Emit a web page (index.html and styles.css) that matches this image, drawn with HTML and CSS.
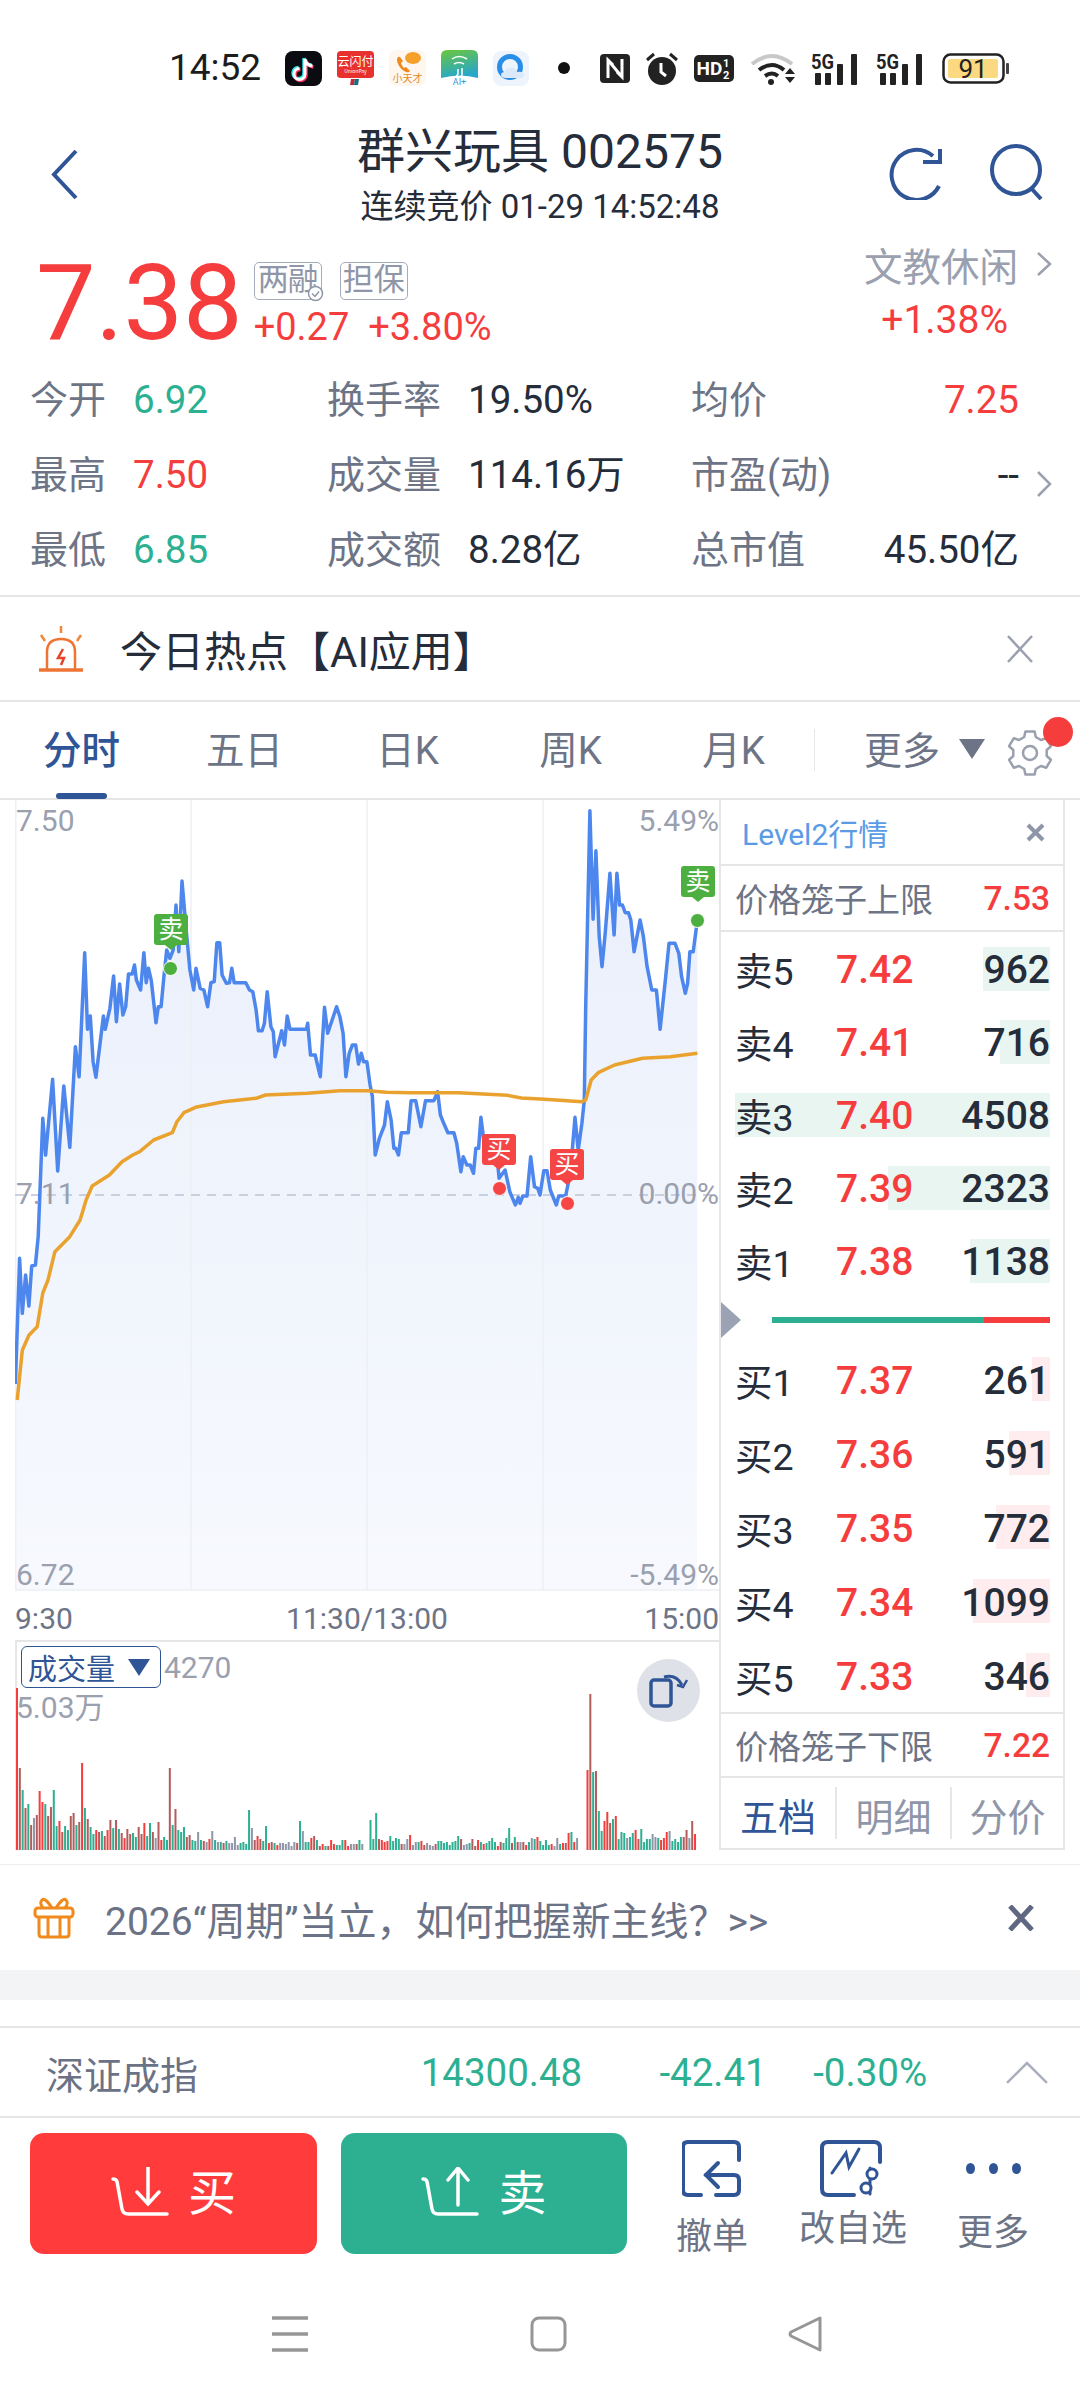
FILE: index.html
```html
<!DOCTYPE html>
<html lang="zh-CN">
<head>
  <meta charset="UTF-8" />
  <title>群兴玩具 002575</title>
  <link rel="stylesheet" href="styles.css">
</head>
<body>

  <!-- status bar -->
  <div class="status">
    <span class="clock">14:52</span>
    <div class="app-icons">
      <svg width="37" height="35" viewBox="0 0 37 35"><rect width="37" height="35" rx="8" fill="#0b0b12"/><path class="tt tt-c" d="M19 7v15a5.5 5.5 0 1 1-5.5-5.5M19 7c.6 4 3.6 6.5 7.5 7"/><path class="tt tt-r" d="M21 9v15a5.5 5.5 0 1 1-5.5-5.5M21 9c.6 4 3.6 6.5 7.5 7"/><path class="tt tt-w" d="M20 8v15a5.5 5.5 0 1 1-5.5-5.5M20 8c.6 4 3.6 6.5 7.5 7"/></svg>
      <svg width="37" height="35" viewBox="0 0 37 35"><path d="M4 0h29q4 0 4 4v20q0 3-4 3H4q-4 0-4-3V4q0-4 4-4z" fill="#e8302c"/><text class="tiny-white" x="18.5" y="15" font-size="12" text-anchor="middle">云闪付</text><text class="tiny-white" x="18.5" y="22" font-size="5" text-anchor="middle">UnionPay</text><path d="M14 28h4l-1 6h-4z" fill="#c22a36"/><path d="M18 28h4l-1 6h-4z" fill="#136f86"/></svg>
      <svg width="37" height="36" viewBox="0 0 37 36"><rect width="37" height="36" rx="8" fill="#fdf7f0"/><path d="M9 7q-2 2 0 7 3 6 8 8 3 1 4-1l-4-4-2 1q-2-2-3-5l2-2-3-4z" fill="#f08a1c"/><ellipse cx="24" cy="8" rx="8" ry="6" fill="#f5a02a"/><text class="tiny-orange" x="18.5" y="32" font-size="10" text-anchor="middle">小天才</text></svg>
      <svg width="37" height="44" viewBox="0 -4 37 44"><defs><linearGradient id="aiGrad" x1="0" y1="0" x2="0.3" y2="1"><stop offset="0" stop-color="#6cc63c"/><stop offset="1" stop-color="#27a7c8"/></linearGradient></defs><path d="M6 0h25q6 0 6 6v22q-18-5-37 0V6q0-6 6-6z" fill="url(#aiGrad)"/><path class="ai-line" d="M11 9q7-5 15 0M13 14q5-3 10 0M17 19v5l-3 4M21 18v10"/><text class="tiny-blue" x="18.5" y="35" font-size="9" text-anchor="middle">AI+</text></svg>
      <svg width="36" height="35" viewBox="0 0 36 35"><rect width="36" height="35" rx="8" fill="#eef4fc"/><circle cx="17" cy="16" r="10.5" fill="none" stroke="#2a8ee8" stroke-width="5"/><path d="M13 27q-5 0-5-3t4-3q1-5 7-4 5 0 5 4 7-1 7 3t-5 3z" fill="#dbe9f8"/></svg>
    </div>
    <span class="status-dot"></span>
    <div class="sys-icons">
      <svg width="30" height="29" viewBox="0 0 30 29"><rect width="30" height="29" rx="4" fill="#222"/><path d="M8 24V6l5 5M22 5v18l-5-5M8 6l14 17" fill="none" stroke="#fff" stroke-width="3"/></svg>
      <svg width="32" height="34" viewBox="0 0 32 34"><circle cx="16" cy="20" r="14" fill="#222"/><path d="M15 12v9l5 4" fill="none" stroke="#fff" stroke-width="3"/><path d="M1 9l7-6M31 9l-7-6" stroke="#222" stroke-width="3"/></svg>
      <svg width="40" height="27" viewBox="0 0 40 27"><rect width="40" height="27" rx="5" fill="#222"/><text class="hd-text" x="2.5" y="20" font-size="19">HD</text><text class="hd-text" x="29" y="12" font-size="11">1</text><text class="hd-text" x="29" y="24" font-size="11">2</text></svg>
      <svg width="45" height="33" viewBox="0 0 45 33"><path d="M2 12q20-16 40 0" fill="none" stroke="#c8c8c8" stroke-width="4"/><path d="M9 18q13-10 25 0M15 24q7-5 13 0" fill="none" stroke="#222" stroke-width="4"/><circle cx="21" cy="30" r="3" fill="#222"/><path d="M35 22l5-6 5 6zM35 25h10l-5 6z" fill="#222"/></svg>
      <svg width="50" height="45" viewBox="0 -6 50 45"><text class="net-text" x="0" y="17" font-size="20" textLength="23" lengthAdjust="spacingAndGlyphs">5G</text><rect x="4" y="21" width="6" height="12" rx="1" fill="#222"/><rect x="14" y="21" width="6" height="12" rx="1" fill="#222"/><rect x="26" y="12" width="6" height="21" rx="1" fill="#222"/><rect x="40" y="2" width="6" height="31" rx="1" fill="#222"/></svg>
      <svg width="50" height="45" viewBox="0 -6 50 45"><text class="net-text" x="0" y="17" font-size="20" textLength="23" lengthAdjust="spacingAndGlyphs">5G</text><rect x="4" y="21" width="6" height="12" rx="1" fill="#222"/><rect x="14" y="21" width="6" height="12" rx="1" fill="#222"/><rect x="26" y="12" width="6" height="21" rx="1" fill="#222"/><rect x="40" y="2" width="6" height="31" rx="1" fill="#222"/></svg>
      <svg width="68" height="31" viewBox="0 0 68 31"><rect x="1.5" y="1.5" width="60" height="28" rx="7" fill="none" stroke="#222" stroke-width="2.5"/><rect x="6" y="6" width="50" height="19" rx="2" fill="#fbd980"/><text class="batt-text" x="31" y="25" font-size="26" text-anchor="middle">91</text><rect x="64" y="10" width="3" height="11" rx="1" fill="#444"/></svg>
    </div>
  </div>

  <!-- header -->
  <div class="header">
    <div class="header-left">
      <svg width="27" height="51" viewBox="0 0 27 51"><path class="ic" d="M25 2L3 25.5 25 49"/></svg>
    </div>
    <div class="header-title">
      <div class="stock-name">群兴玩具 002575</div>
      <div class="stock-sub">连续竞价 01-29 14:52:48</div>
    </div>
    <div class="header-right">
      <svg width="56" height="56" viewBox="0 0 56 56"><path class="ic" d="M46 12A25 25 0 1 0 52 42"/><path class="ic" d="M53 5V18H36"/></svg>
      <svg width="56" height="56" viewBox="0 0 56 56"><circle class="ic" cx="27" cy="26" r="24"/><path class="ic" d="M42 44l10 11"/></svg>
    </div>
  </div>

  <!-- price -->
  <div class="quote">
    <div class="price">7.38</div>
    <div class="quote-mid">
      <div class="tags">
        <span class="tag tag-check">两融
          <svg class="tag-tick" width="17" height="17" viewBox="0 0 17 17"><circle cx="8.5" cy="8.5" r="7" fill="#fff" stroke="#8f96a8" stroke-width="1.5"/><path d="M5 8.5l3 3 4-5" fill="none" stroke="#8f96a8" stroke-width="1.5"/></svg>
        </span>
        <span class="tag">担保</span>
      </div>
      <div class="change">+0.27&nbsp;&nbsp;+3.80%</div>
    </div>
    <div class="sector">
      <div class="sector-name">文教休闲
        <svg width="16" height="24" viewBox="0 0 16 24"><path class="chev" d="M2 1l12 11L2 23"/></svg>
      </div>
      <div class="sector-pct">+1.38%</div>
    </div>
  </div>

  <!-- stats -->
  <div class="stats">
    <div class="stat"><span class="lbl">今开</span><span class="num green">6.92</span></div>
    <div class="stat"><span class="lbl">换手率</span><span class="num">19.50%</span></div>
    <div class="stat stat-wide"><span class="lbl">均价</span><span class="num red">7.25</span></div>
    <div class="stat"><span class="lbl">最高</span><span class="num red">7.50</span></div>
    <div class="stat"><span class="lbl">成交量</span><span class="num">114.16万</span></div>
    <div class="stat stat-wide"><span class="lbl">市盈(动)</span><span class="num">--</span></div>
    <div class="stat"><span class="lbl">最低</span><span class="num green">6.85</span></div>
    <div class="stat"><span class="lbl">成交额</span><span class="num">8.28亿</span></div>
    <div class="stat stat-wide"><span class="lbl">总市值</span><span class="num">45.50亿</span></div>
    <svg class="stats-chev" width="16" height="26" viewBox="0 0 16 26"><path class="chev" d="M2 1l12 12L2 25"/></svg>
  </div>

  <!-- hot topic -->
  <div class="hot">
    <svg width="46" height="46" viewBox="0 0 46 46">
      <defs><linearGradient id="alertGrad" x1="0" y1="0" x2="1" y2="1"><stop offset="0" stop-color="#f6a04a"/><stop offset="1" stop-color="#e8502a"/></linearGradient></defs>
      <path d="M1 44h44" stroke="#ee7434" stroke-width="3.5" fill="none"/>
      <path d="M9 43V26q0-13 14-13t14 13v17" fill="none" stroke="#ee7434" stroke-width="2.5"/>
      <path d="M25 23l-5 9h6l-3 7" fill="none" stroke="#e8442a" stroke-width="2.5"/>
      <path d="M23 0v7M3 9l4 6M43 9l-4 6" stroke="#f0883c" stroke-width="2.5"/>
    </svg>
    <span class="hot-text">今日热点【AI应用】</span>
    <svg class="hot-close" width="28" height="28" viewBox="0 0 28 28"><path d="M2 1l24 26M26 1L2 27" fill="none" stroke="#9aa0ae" stroke-width="2.5"/></svg>
  </div>

  <!-- chart tabs -->
  <div class="tabs">
    <span class="tab tab-on">分时</span>
    <span class="tab">五日</span>
    <span class="tab">日K</span>
    <span class="tab">周K</span>
    <span class="tab">月K</span>
    <span class="tab-sep"></span>
    <span class="tab-more">更多</span>
    <span class="tab-tri"></span>
    <svg class="gear" width="48" height="48" viewBox="0 0 48 48"><path d="M19.4 2.5H28.6L29.8 8 34.9 11 40.3 9.3 44.9 17.2 40.7 21V27L44.9 30.8 40.3 38.7 34.9 37 29.8 40 28.6 45.5H19.4L18.2 40 13.1 37 7.7 38.7 3.1 30.8 7.3 27V21L3.1 17.2 7.7 9.3 13.1 11 18.2 8z" fill="none" stroke="#9aa0ae" stroke-width="2.5" stroke-linejoin="round"/><circle cx="24" cy="24" r="7" fill="none" stroke="#9aa0ae" stroke-width="2.5"/></svg>
    <span class="tab-badge"></span>
  </div>

  <div class="board">
    <div class="charts">
      <!-- price chart -->
      <div class="price-chart" id="priceChart">
        <svg class="plot" id="pricePlot" width="704" height="791" viewBox="15 800 704 791">
          <defs><linearGradient id="areaGrad" x1="0" y1="0" x2="0" y2="1"><stop offset="0" stop-color="#e9effb"/><stop offset="1" stop-color="#f7f9fe"/></linearGradient></defs>
        </svg>
        <span class="axis tl">7.50</span>
        <span class="axis tr">5.49%</span>
        <span class="axis ml">7.11</span>
        <span class="axis mr">0.00%</span>
        <span class="axis bl">6.72</span>
        <span class="axis br">-5.49%</span>
      </div>
      <div class="times"><span>9:30</span><span>11:30/13:00</span><span class="times-end">15:00</span></div>
      <!-- volume chart -->
      <div class="vol-chart">
        <svg class="plot" id="volPlot" width="704" height="210" viewBox="15 1640 704 210"></svg>
        <div class="vol-head">
          <span class="vol-select">成交量<i class="vol-tri"></i></span>
          <span class="vol-now">4270</span>
        </div>
        <div class="vol-max">5.03万</div>
        <div class="rotate">
          <svg width="40" height="34" viewBox="0 0 40 34"><rect x="2" y="6" width="20" height="26" rx="3" fill="none" stroke="#2f5597" stroke-width="3.5"/><path d="M15 3q12-3 18 8" fill="none" stroke="#2f5597" stroke-width="3"/><path d="M28 11l6 2 4-7" fill="none" stroke="#2f5597" stroke-width="2.5"/></svg>
        </div>
      </div>
    </div>

    <!-- order book -->
    <div class="book">
      <div class="book-head"><span class="book-title">Level2行情</span>
        <svg width="19" height="19" viewBox="0 0 19 19"><path d="M2 2l15 15M17 2L2 17" fill="none" stroke="#8f96a8" stroke-width="4"/></svg>
      </div>
      <div class="limit limit-top"><span>价格笼子上限</span><b>7.53</b></div>
      <div class="row"><span class="row-bar bar-sell" style="width:67px"></span><span class="row-lbl">卖5</span><span class="row-price">7.42</span><span class="row-vol">962</span></div>
      <div class="row"><span class="row-bar bar-sell" style="width:50px"></span><span class="row-lbl">卖4</span><span class="row-price">7.41</span><span class="row-vol">716</span></div>
      <div class="row"><span class="row-bar bar-sell" style="width:315px"></span><span class="row-lbl">卖3</span><span class="row-price">7.40</span><span class="row-vol">4508</span></div>
      <div class="row"><span class="row-bar bar-sell" style="width:162px"></span><span class="row-lbl">卖2</span><span class="row-price">7.39</span><span class="row-vol">2323</span></div>
      <div class="row"><span class="row-bar bar-sell" style="width:80px"></span><span class="row-lbl">卖1</span><span class="row-price">7.38</span><span class="row-vol">1138</span></div>
      <div class="split">
        <span class="split-tri"></span>
        <div class="split-line"><i class="split-green"></i><i class="split-red"></i></div>
      </div>
      <div class="row row-buy"><span class="row-bar bar-buy" style="width:18px"></span><span class="row-lbl">买1</span><span class="row-price">7.37</span><span class="row-vol">261</span></div>
      <div class="row row-buy"><span class="row-bar bar-buy" style="width:41px"></span><span class="row-lbl">买2</span><span class="row-price">7.36</span><span class="row-vol">591</span></div>
      <div class="row row-buy"><span class="row-bar bar-buy" style="width:54px"></span><span class="row-lbl">买3</span><span class="row-price">7.35</span><span class="row-vol">772</span></div>
      <div class="row row-buy"><span class="row-bar bar-buy" style="width:77px"></span><span class="row-lbl">买4</span><span class="row-price">7.34</span><span class="row-vol">1099</span></div>
      <div class="row row-buy"><span class="row-bar bar-buy" style="width:24px"></span><span class="row-lbl">买5</span><span class="row-price">7.33</span><span class="row-vol">346</span></div>
      <div class="limit limit-bottom"><span>价格笼子下限</span><b>7.22</b></div>
      <div class="book-tabs">
        <span class="book-tab book-tab-on">五档</span>
        <span class="book-tab">明细</span>
        <span class="book-tab">分价</span>
      </div>
    </div>
  </div>

  <!-- promo -->
  <div class="promo">
    <svg width="42" height="43" viewBox="0 0 42 43"><g fill="none" stroke="#f08a1c" stroke-width="3"><rect x="2" y="12" width="38" height="9" rx="3"/><path d="M6 21v17q0 3 3 3h24q3 0 3-3V21M15 21v20M27 21v20"/><path d="M19 12q-7-11-10-8t1 8M23 12q7-11 10-8t-1 8"/></g></svg>
    <span class="promo-text">2026“周期”当立，如何把握新主线？&gt;&gt;</span>
    <svg class="promo-close" width="28" height="26" viewBox="0 0 28 26"><path d="M3 1l22 24M25 1L3 25" fill="none" stroke="#5f6880" stroke-width="5"/></svg>
  </div>
  <div class="band"></div>
  <div class="band-white"></div>

  <!-- index ticker -->
  <div class="index">
    <span class="index-name">深证成指</span>
    <span class="index-val">14300.48</span>
    <span class="index-chg">-42.41</span>
    <span class="index-pct">-0.30%</span>
    <svg width="42" height="23" viewBox="0 0 42 23"><path d="M1 22L21 2l20 20" fill="none" stroke="#a9afbd" stroke-width="2.5"/></svg>
  </div>

  <!-- actions -->
  <div class="actions">
    <div class="trade trade-buy">
      <svg width="58" height="50" viewBox="0 0 58 50"><path class="ic-w" d="M2 12c4 0 4 2 5 8l4 22q1 5 6 5h39"/><path class="ic-w" d="M37 0v37M26 25l11 12 11-12"/></svg>
      <span>买</span>
    </div>
    <div class="trade trade-sell">
      <svg width="58" height="50" viewBox="0 0 58 50"><path class="ic-w" d="M2 12c4 0 4 2 5 8l4 22q1 5 6 5h39"/><path class="ic-w" d="M37 38V1M27 13L37 1l10 12"/></svg>
      <span>卖</span>
    </div>
    <div class="act act-cancel">
      <svg width="60" height="58" viewBox="0 0 60 58"><path class="ic-s" d="M19 55H6q-5 0-5-5V7q0-5 5-5h46q5 0 5 5v13"/><path class="ic-s" d="M34 55h18q5 0 5-5V40q0-5-5-5H24"/><path class="ic-s" d="M36 23L24 35l12 12"/></svg>
      <span>撤单</span>
    </div>
    <div class="act act-edit">
      <svg width="66" height="58" viewBox="0 0 66 58"><path class="ic-s" d="M34 55H8q-6 0-6-6V8q0-6 6-6h46q6 0 6 6v14"/><path class="ic-s ic-thin" d="M12 33l14-20 3 14 10-18"/><path class="ic-s ic-thin" d="M50 28v26"/><circle class="ic-s ic-fill" cx="52" cy="34" r="5"/><circle class="ic-s ic-fill" cx="46" cy="48" r="5"/></svg>
      <span>改自选</span>
    </div>
    <div class="act act-more">
      <div class="more-dots"><i></i><i></i><i></i></div>
      <span>更多</span>
    </div>
  </div>

  <!-- nav bar -->
  <div class="nav">
    <svg width="38" height="36" viewBox="0 0 38 36"><path d="M1 2h36M1 18h36M1 34h36" stroke="#969696" stroke-width="3.5"/></svg>
    <svg width="37" height="36" viewBox="0 0 37 36"><rect x="2" y="2" width="33" height="32" rx="7" fill="none" stroke="#969696" stroke-width="3"/></svg>
    <svg width="35" height="36" viewBox="0 0 35 36"><path d="M32 2v32L3 20q-2-2 0-4z" fill="none" stroke="#969696" stroke-width="3" stroke-linejoin="round"/></svg>
  </div>

  <script src="chart.js"></script>
</body>
</html>
```

FILE: styles.css
```css
* { box-sizing: border-box; }

html, body {
  margin: 0;
  padding: 0;
}

body {
  width: 1080px;
  height: 2400px;
  overflow: hidden;
  background: #fff;
  color: #252c3a;
  font-family: Roboto, "Noto Sans CJK SC", sans-serif;
}

.green { color: #2db092; }
.red { color: #f53d3d; }

/* status bar */
.status {
  height: 96px;
  padding: 40px 0 0 169px;
  display: flex;
  align-items: center;
}
.clock {
  font-size: 37px;
  line-height: 56px;
  color: #1c1c1c;
  width: 93px;
}
.app-icons {
  display: flex;
  align-items: center;
  gap: 15px;
  margin-left: 23px;
}
.tt { fill: none; stroke-width: 3.5; }
.tt-c { stroke: #2fe0e6; }
.tt-r { stroke: #f5305c; }
.tt-w { stroke: #fff; stroke-width: 3; }
.tiny-white { fill: #fff; font-family: "Noto Sans CJK SC", sans-serif; }
.tiny-orange { fill: #e8861c; font-family: "Noto Sans CJK SC", sans-serif; }
.tiny-blue { fill: #3a9ad8; font-family: Roboto, sans-serif; }
.ai-line { fill: none; stroke: #fff; stroke-width: 1.5; }
.status-dot {
  width: 12px;
  height: 12px;
  border-radius: 50%;
  background: #111;
  margin-left: 29px;
}
.sys-icons {
  display: flex;
  align-items: center;
  gap: 16px;
  margin-left: 30px;
}
.sys-icons svg:nth-child(6) { margin-left: -1px; }
.hd-text { fill: #fff; font-family: Roboto, sans-serif; font-weight: 700; }
.net-text { fill: #222; font-family: Roboto, sans-serif; font-weight: 700; }
.batt-text { fill: #222; font-family: Roboto, sans-serif; }

/* header */
.header {
  height: 138px;
  display: grid;
  grid-template-columns: 1fr auto 1fr;
}
.header-left {
  padding: 53px 0 0 51px;
}
.header-right {
  padding: 48px 35px 0 0;
  display: flex;
  justify-content: flex-end;
  gap: 46px;
}
.ic {
  fill: none;
  stroke: #2f5597;
  stroke-width: 4;
}
.header-title {
  text-align: center;
  padding-top: 28px;
}
.stock-name {
  font-size: 48px;
  line-height: 56px;
  color: #252c3a;
}
.stock-sub {
  font-size: 33px;
  line-height: 54px;
  color: #252c3a;
}

/* price */
.quote {
  height: 128px;
  padding-left: 36px;
  display: flex;
}
.price {
  margin-top: 19px;
  font-size: 106px;
  line-height: 100px;
  color: #f53d3d;
}
.quote-mid {
  margin: 28px 0 0 11px;
}
.tags {
  display: flex;
  gap: 18px;
}
.tag {
  position: relative;
  width: 68px;
  height: 38px;
  border: 1.5px solid #a5abbb;
  border-radius: 5px;
  font-size: 31px;
  line-height: 33px;
  color: #8f96a8;
  text-align: center;
  white-space: nowrap;
}
.tag-check { letter-spacing: -1px; }
.tag-tick {
  position: absolute;
  right: -3px;
  bottom: -3px;
}
.change {
  margin-top: 5px;
  font-size: 38px;
  line-height: 44px;
  color: #f53d3d;
  white-space: nowrap;
}
.sector {
  margin: 16px 28px 0 auto;
  text-align: right;
}
.sector-name {
  display: flex;
  align-items: center;
  gap: 18px;
  font-size: 38.5px;
  line-height: 35px;
  color: #9aa0ae;
}
.sector-name svg { margin-top: -8px; }
.chev {
  fill: none;
  stroke: #9aa0ae;
  stroke-width: 2.5;
}
.sector-pct {
  margin-top: 17px;
  padding-right: 44px;
  font-size: 39px;
  line-height: 36px;
  color: #f53d3d;
}

/* stats */
.stats {
  position: relative;
  height: 235px;
  padding-left: 30px;
  display: grid;
  grid-template-columns: 297px 364px 328px;
  grid-auto-rows: 75px;
  align-items: center;
  border-bottom: 2px solid #e6e6e8;
}
.stat {
  display: flex;
  align-items: center;
  gap: 27px;
}
.stat-wide { justify-content: space-between; }
.lbl {
  font-size: 38px;
  line-height: 50px;
  color: #6d7486;
}
.num {
  font-size: 38.5px;
  line-height: 50px;
  color: #252c3a;
}
.num.green { color: #2db092; }
.num.red { color: #f53d3d; }
.stats-chev {
  position: absolute;
  left: 1036px;
  top: 109px;
}

/* hot topic */
.hot {
  height: 105px;
  padding: 0 46px 0 38px;
  display: flex;
  align-items: center;
  border-bottom: 2px solid #e6e6e8;
}
.hot-text {
  margin-left: 36px;
  font-size: 42px;
  color: #252c3a;
}
.hot-close { margin-left: auto; }

/* tabs */
.tabs {
  position: relative;
  height: 98px;
  display: flex;
  align-items: center;
  border-bottom: 2px solid #e6e6e8;
}
.tab {
  width: 163px;
  margin-top: -6px;
  text-align: center;
  font-size: 38.5px;
  color: #6d7486;
}
.tab-on {
  color: #2f5597;
  font-weight: 500;
}
.tab-on::after {
  content: "";
  position: absolute;
  left: 56px;
  bottom: -1px;
  width: 51px;
  height: 6px;
  border-radius: 3px;
  background: #2f5597;
}
.tab-sep {
  width: 1px;
  height: 42px;
  background: #e6e6e8;
  margin-left: -1px;
}
.tab-more {
  margin-left: 49px;
  margin-top: -6px;
  font-size: 38px;
  color: #6d7486;
}
.tab-tri {
  margin-left: 19px;
  margin-top: -2px;
  width: 0;
  height: 0;
  border-left: 13px solid transparent;
  border-right: 13px solid transparent;
  border-top: 20px solid #6d7486;
}
.gear { margin-left: 21px; margin-top: 6px; }
.tab-badge {
  position: absolute;
  left: 1043px;
  top: 15px;
  width: 30px;
  height: 30px;
  border-radius: 50%;
  background: #f53d3d;
}

/* chart column */
.board {
  display: flex;
  padding-left: 15px;
  height: 1050px;
}
.charts { width: 704px; }
.price-chart {
  position: relative;
  height: 791px;
}
.plot {
  position: absolute;
  left: 0;
  top: 0;
}
.axis {
  position: absolute;
  font-size: 30px;
  line-height: 36px;
  color: #9aa0ae;
}
.tl { left: 1px; top: 3px; }
.tr { right: 0; top: 3px; }
.ml { left: 1px; top: 376px; }
.mr { right: 0; top: 376px; }
.bl { left: 1px; top: 757px; }
.br { right: 0; top: 757px; }

.line-price { fill: none; stroke: #4d87ee; stroke-width: 3.5; stroke-linejoin: round; }
.line-avg { fill: none; stroke: #eaa22f; stroke-width: 3.5; stroke-linejoin: round; }
.area { fill: url(#areaGrad); }
.grid-line { stroke: #edeff3; stroke-width: 1.5; }
.zero-line { stroke: #c9d0e0; stroke-width: 2; stroke-dasharray: 9 7; }

.bar-r { fill: #f53d3d; }
.bar-g { fill: #2db092; }
.bar-d { fill: #b35c5c; }
.bar-s { fill: #8f96a8; }

/* buy and sell marks on the chart */
.mark {
  position: absolute;
  width: 34px;
  height: 31px;
  border-radius: 3px;
  color: #fff;
  font-size: 25px;
  line-height: 31px;
  text-align: center;
}
.mark::after {
  content: "";
  position: absolute;
  left: 11px;
  bottom: -5px;
  border-left: 6px solid transparent;
  border-right: 6px solid transparent;
}
.mark-sell { background: #4caf3f; }
.mark-sell::after { border-top: 5px solid #4caf3f; }
.mark-buy { background: #f54545; }
.mark-buy::after { border-top: 5px solid #f54545; }
.mark-dot {
  position: absolute;
  width: 15px;
  height: 15px;
  border-radius: 50%;
  border: 1.5px solid #fff;
}
.dot-sell { background: #4caf3f; }
.dot-buy { background: #f54545; }

.times {
  height: 49px;
  padding-top: 6px;
  display: grid;
  grid-template-columns: 1fr auto 1fr;
  align-items: center;
  font-size: 30px;
  color: #6d7486;
}
.times-end { text-align: right; }

/* volume */
.vol-chart {
  position: relative;
  height: 210px;
  border-top: 2px solid #e6e6e8;
  border-left: 2px solid #e6e6e8;
}
.vol-chart .plot { left: -2px; top: -2px; }
.vol-head {
  position: relative;
  display: flex;
  align-items: center;
  padding: 4px 0 0 4px;
}
.vol-select {
  width: 140px;
  height: 42px;
  border: 1.5px solid #2f5597;
  border-radius: 6px;
  padding-left: 6px;
  display: flex;
  align-items: center;
  font-size: 29px;
  color: #2f5597;
}
.vol-tri {
  margin-left: 13px;
  width: 0;
  height: 0;
  border-left: 11px solid transparent;
  border-right: 11px solid transparent;
  border-top: 17px solid #2f5597;
}
.vol-now {
  margin-left: 3px;
  font-size: 30px;
  color: #9aa0ae;
}
.vol-max {
  position: relative;
  margin-top: 1px;
  margin-left: -1px;
  font-size: 30px;
  line-height: 38px;
  color: #9aa0ae;
}
.rotate {
  position: absolute;
  left: 620px;
  top: 17px;
  width: 63px;
  height: 63px;
  border-radius: 50%;
  background: #dfe1e8;
  display: flex;
  align-items: center;
  justify-content: center;
}

/* order book */
.book {
  width: 346px;
  height: 1050px;
  border: solid #e6e6e8;
  border-width: 0 2px 2px 2px;
}
.book-head {
  height: 66px;
  padding: 0 18px 0 21px;
  display: flex;
  align-items: center;
  justify-content: space-between;
  border-bottom: 2px solid #e6e6e8;
}
.book-title {
  font-size: 30px;
  color: #5b9be6;
}
.limit {
  height: 66px;
  padding: 0 13px 0 14px;
  display: flex;
  align-items: center;
  justify-content: space-between;
  font-size: 33px;
  color: #6d7486;
}
.limit b {
  font-size: 33.5px;
  font-weight: 500;
  color: #f53d3d;
}
.limit-top { border-bottom: 2px solid #e6e6e8; }
.limit-bottom {
  border-top: 2px solid #e6e6e8;
  border-bottom: 2px solid #e6e6e8;
}
.row {
  position: relative;
  height: 73px;
  padding: 0 13px 0 14px;
  display: flex;
  align-items: center;
}
.row-buy { height: 74px; }
.row-bar {
  position: absolute;
  right: 13px;
  top: 15px;
  height: 44px;
}
.bar-sell { background: #e8f5f1; }
.bar-buy { background: #feecee; }
.row-lbl {
  position: relative;
  width: 101px;
  font-size: 37.5px;
  color: #252c3a;
}
.row-price {
  position: relative;
  padding-top: 3px;
  font-size: 39px;
  font-weight: 500;
  color: #f53d3d;
}
.row-vol {
  position: relative;
  margin-left: auto;
  padding-top: 3px;
  font-size: 39px;
  font-weight: 500;
  color: #252c3a;
}
.split {
  height: 45px;
  display: flex;
  align-items: center;
  padding-right: 13px;
}
.split-tri {
  width: 0;
  height: 0;
  border-top: 18px solid transparent;
  border-bottom: 18px solid transparent;
  border-left: 20px solid #9aa2b4;
}
.split-line {
  margin-left: 31px;
  flex: 1;
  height: 6px;
  display: flex;
}
.split-green { width: 212px; background: #2db092; }
.split-red { flex: 1; background: #f53d3d; }
.book-tabs {
  height: 70px;
  display: grid;
  grid-template-columns: 114px 115px 1fr;
  align-items: center;
}
.book-tab {
  height: 52px;
  line-height: 62px;
  text-align: center;
  font-size: 38px;
  color: #8f96a8;
  border-left: 2px solid #e6e6e8;
}
.book-tab:first-child { border-left: none; }
.book-tab-on { color: #2f5597; }

/* promo */
.promo {
  height: 106px;
  margin-top: 14px;
  padding: 0 45px 0 33px;
  display: flex;
  align-items: center;
  border-top: 1.5px solid #eeeef0;
}
.promo-text {
  margin-left: 30px;
  font-size: 39px;
  color: #6b7286;
}
.promo-close { margin-left: auto; }
.band {
  height: 30px;
  background: #f3f4f6;
}
.band-white { height: 26px; }

/* index ticker */
.index {
  height: 92px;
  padding: 0 32px 0 46px;
  display: flex;
  align-items: center;
  border-top: 2px solid #e6e6e8;
  border-bottom: 2px solid #e6e6e8;
  color: #2db092;
}
.index-name {
  width: 375px;
  font-size: 38px;
  color: #6b7286;
}
.index-val { width: 239px; font-size: 38.5px; }
.index-chg { width: 154px; font-size: 38.5px; }
.index-pct { width: 193px; font-size: 38.5px; }

/* actions */
.actions {
  height: 142px;
  padding: 15px 0 0 30px;
  display: flex;
  align-items: flex-start;
}
.trade {
  width: 287px;
  height: 121px;
  border-radius: 14px;
  display: flex;
  align-items: center;
  justify-content: center;
  gap: 19px;
  color: #fff;
  font-size: 48px;
}
.trade svg { margin-top: -4px; }
.trade span { line-height: 50px; }
.trade-buy { background: #ff3b3b; }
.trade-sell {
  width: 286px;
  margin-left: 24px;
  background: #2db092;
}
.ic-w {
  fill: none;
  stroke: #fff;
  stroke-width: 3.5;
  stroke-linecap: round;
}
.ic-s {
  fill: none;
  stroke: #2f5597;
  stroke-width: 4;
  stroke-linecap: round;
}
.ic-thin { stroke-width: 3; }
.ic-fill { fill: #fff; stroke-width: 3; }
.act {
  display: flex;
  flex-direction: column;
  align-items: center;
  padding-top: 7px;
  font-size: 36px;
  color: #6d7486;
}
.act span { line-height: 44px; white-space: nowrap; }
.act-cancel { width: 70px; margin-left: 50px; }
.act-cancel span { margin-top: 17px; }
.act-edit { width: 106px; margin-left: 53px; }
.act-edit span { margin-top: 9px; }
.act-more { width: 70px; margin-left: 52px; }
.more-dots {
  height: 58px;
  display: flex;
  align-items: center;
  gap: 14px;
  margin-bottom: 13px;
  padding-bottom: 2px;
}
.more-dots i {
  width: 9px;
  height: 11px;
  border-radius: 50%;
  background: #2f5597;
}

/* nav bar */
.nav {
  height: 140px;
  padding: 56px 0 0 271px;
  display: flex;
  align-items: flex-start;
  gap: 221px;
}
```

FILE: chart.js
```js
// chart data, sampled at x*2.148 and (y-790)*3
const toX = x => (x / 2.148).toFixed(1);
const toY = y => (790 + y / 3).toFixed(1);
const NS = 'http://www.w3.org/2000/svg';

const pricePts = [
  33,1782, 42,1405, 48,1570, 55,1455, 62,1548, 68,1428, 76,1425, 82,1340, 92,985, 98,1095, 113,868, 124,1143,
  137,888, 150,1072, 162,770, 170,860, 182,488, 188,718, 194,678, 200,815, 206,862, 222,678, 226,718, 236,655,
  244,558, 250,695, 257,582, 264,675, 270,650, 276,552, 284,552, 289,525, 293,570, 302,600, 309,488, 314,578,
  319,535, 325,572, 335,698, 340,650, 346,650, 352,560, 358,480, 365,505, 372,480, 378,345, 384,485, 391,273,
  400,420, 408,540, 416,600, 421,535, 430,595, 438,600, 446,650, 453,578, 460,575, 466,458, 472,458, 477,555,
  486,580, 493,578, 498,535, 503,578, 528,578, 536,600, 543,605, 550,660, 555,722, 563,722, 568,700, 574,605,
  582,710, 587,725, 591,800, 605,722, 611,765, 617,678, 623,718, 658,718, 661,700, 667,795, 677,795, 682,825,
  688,860, 697,652, 704,730, 723,650, 730,680, 737,730, 743,860, 750,790, 757,765, 764,765, 770,822, 776,790,
  781,815, 788,815, 795,885, 800,920, 806,1095, 815,1045, 826,1005, 832,935, 840,990, 846,1075, 850,1075,
  856,1095, 862,1028, 877,1028, 883,932, 893,932, 904,1010, 914,932, 932,932, 940,905, 946,975, 953,1000,
  962,1028, 975,1028, 981,1060, 990,1145, 995,1100, 1003,1125, 1010,1125, 1017,1150, 1022,1075, 1028,1075,
  1033,982, 1040,1060, 1068,1105, 1072,1165, 1085,1140, 1095,1205, 1107,1245, 1113,1222, 1117,1240, 1123,1218,
  1132,1218, 1140,1100, 1148,1190, 1155,1195, 1160,1215, 1168,1142, 1175,1142, 1182,1200, 1195,1245, 1200,1218,
  1215,1218, 1225,1150, 1235,982, 1242,1080, 1250,1000, 1255,930, 1258,650, 1267,62, 1274,388, 1280,182,
  1287,440, 1293,530, 1300,430, 1310,250, 1319,435, 1325,250, 1331,345, 1337,345, 1343,368, 1350,368, 1355,390,
  1362,485, 1375,390, 1382,440, 1390,530, 1400,600, 1410,600, 1418,718, 1430,560, 1437,460, 1450,460, 1458,490,
  1464,560, 1472,610, 1477,580, 1482,485, 1489,485, 1498,390
];

const avgPts = [
  37,1830, 48,1681, 62,1636, 80,1610, 92,1509, 103,1470, 118,1385, 150,1340, 172,1290, 185,1230, 198,1188,
  235,1155, 262,1115, 285,1095, 300,1085, 330,1050, 370,1028, 380,995, 395,968, 420,952, 480,935, 550,925,
  570,915, 660,910, 730,902, 790,902, 830,907, 880,908, 985,908, 1090,916, 1120,924, 1170,928, 1250,935,
  1258,930, 1270,870, 1285,848, 1320,825, 1380,805, 1440,800, 1498,790
];

function pointsOf(list) {
  let out = [];
  for (let i = 0; i < list.length; i += 2) {
    out.push(toX(list[i]) + ',' + toY(list[i + 1]));
  }
  return out.join(' ');
}

function add(svg, tag, attrs) {
  const el = document.createElementNS(NS, tag);
  for (const k in attrs) el.setAttribute(k, attrs[k]);
  svg.appendChild(el);
}

const plot = document.getElementById('pricePlot');
add(plot, 'polygon', { class: 'area', points: pointsOf(pricePts) + ' 697,1591 15,1591' });
[15.75, 191, 367, 543].forEach(x => {
  add(plot, 'line', { class: 'grid-line', x1: x, x2: x, y1: 800, y2: 1591 });
});
add(plot, 'line', { class: 'grid-line', x1: 15, x2: 719, y1: 1590, y2: 1590 });
add(plot, 'line', { class: 'zero-line', x1: 15, x2: 719, y1: 1195, y2: 1195 });
add(plot, 'polyline', { class: 'line-price', points: pointsOf(pricePts) });
add(plot, 'polyline', { class: 'line-avg', points: pointsOf(avgPts) });

// buy / sell marks: tag left, tag top, dot centre x, dot centre y (page px)
const marks = [
  ['sell', 154, 914, 170, 968],
  ['sell', 681, 866, 697, 920],
  ['buy', 482, 1134, 499, 1188],
  ['buy', 550, 1149, 567, 1203]
];
const box = document.getElementById('priceChart');
marks.forEach(m => {
  const tag = document.createElement('div');
  tag.className = 'mark mark-' + m[0];
  tag.textContent = m[0] === 'sell' ? '卖' : '买';
  tag.style.left = (m[1] - 15) + 'px';
  tag.style.top = (m[2] - 800) + 'px';
  box.appendChild(tag);
  const dot = document.createElement('div');
  dot.className = 'mark-dot dot-' + m[0];
  dot.style.left = (m[3] - 15 - 7.5) + 'px';
  dot.style.top = (m[4] - 800 - 7.5) + 'px';
  box.appendChild(dot);
});

// volume bars: colour letter + height*3
const volA = 'r486 d246 g180 d126 g138 d75 s96 d105 r177 r144 g138 d102 d129 g180 g72 r87 d54 g72 g60 d102 d111 g75 d84 r261 ' +
  'g126 d93 g69 g48 r60 d54 g57 d42 r60 d90 g66 d90 g63 d51 r36 d63 d48 g51 g39 d69 d48 r81 g42 g81 d54 s36 d84 r30 g39 g30 ' +
  'd246 g75 d123 g60 g54 g69 d39 d45 g30 g27 s54 g30 d27 s24 r33 s57 g30 s24 g24 d21 g27 s21 s21 s39 s15 g21 g24 g18 g120 s66 ' +
  'd30 r42 d33 g27 g72 r21 d24 g21 r15 s21 s21 s18 s24 s12 s24 d21 g87 s57 g24 g24 r36 d42 g30 d12 r18 g12 d12 r30 r18 g15 g15 ' +
  'g30 r30 r12 s18 s18 d18 g30 s18';
const volB = 'g90 g33 g111 d33 r30 r24 r27 g42 g27 g36 g33 d18 s18 s33 r45 s15 s24 g24 r27 d15 s21 s15 s12 d18 g27 g27 g21 g24 g15 ' +
  'g24 g27 g42 d33 s15 s18 g21 d33 d12 r30 g24 r18 g21 g27 g36 g24 r12 d24 g21 g36 g66 d21 g39 d24 s24 d24 r15 g24 s36 g33 r39 g27 ' +
  'g15 g30 g15 r18 s12 s36 g18 r21 d21 r51 g54 r24 s36';
const volC = 'r240 d468 g234 d237 g117 g57 r87 r114 d81 g93 r102 g33 g54 g51 s36 g39 g51 r60 d33 g63 g24 g33 g33 s48 s39 g36 r30 r36 ' +
  'r54 s57 g27 g33 g24 g39 d39 d60 s36 d87 r48';

const volPlot = document.getElementById('volPlot');
function drawBars(startX, data) {
  data.split(' ').forEach((t, i) => {
    const h = parseInt(t.slice(1), 10) / 3;
    add(volPlot, 'rect', {
      class: 'bar-' + t[0],
      x: (startX + i * 2.83).toFixed(2),
      y: (1850 - h).toFixed(1),
      width: 2,
      height: h.toFixed(1)
    });
  });
}
drawBars(16, volA);
drawBars(369.5, volB);
drawBars(586.5, volC);
```
